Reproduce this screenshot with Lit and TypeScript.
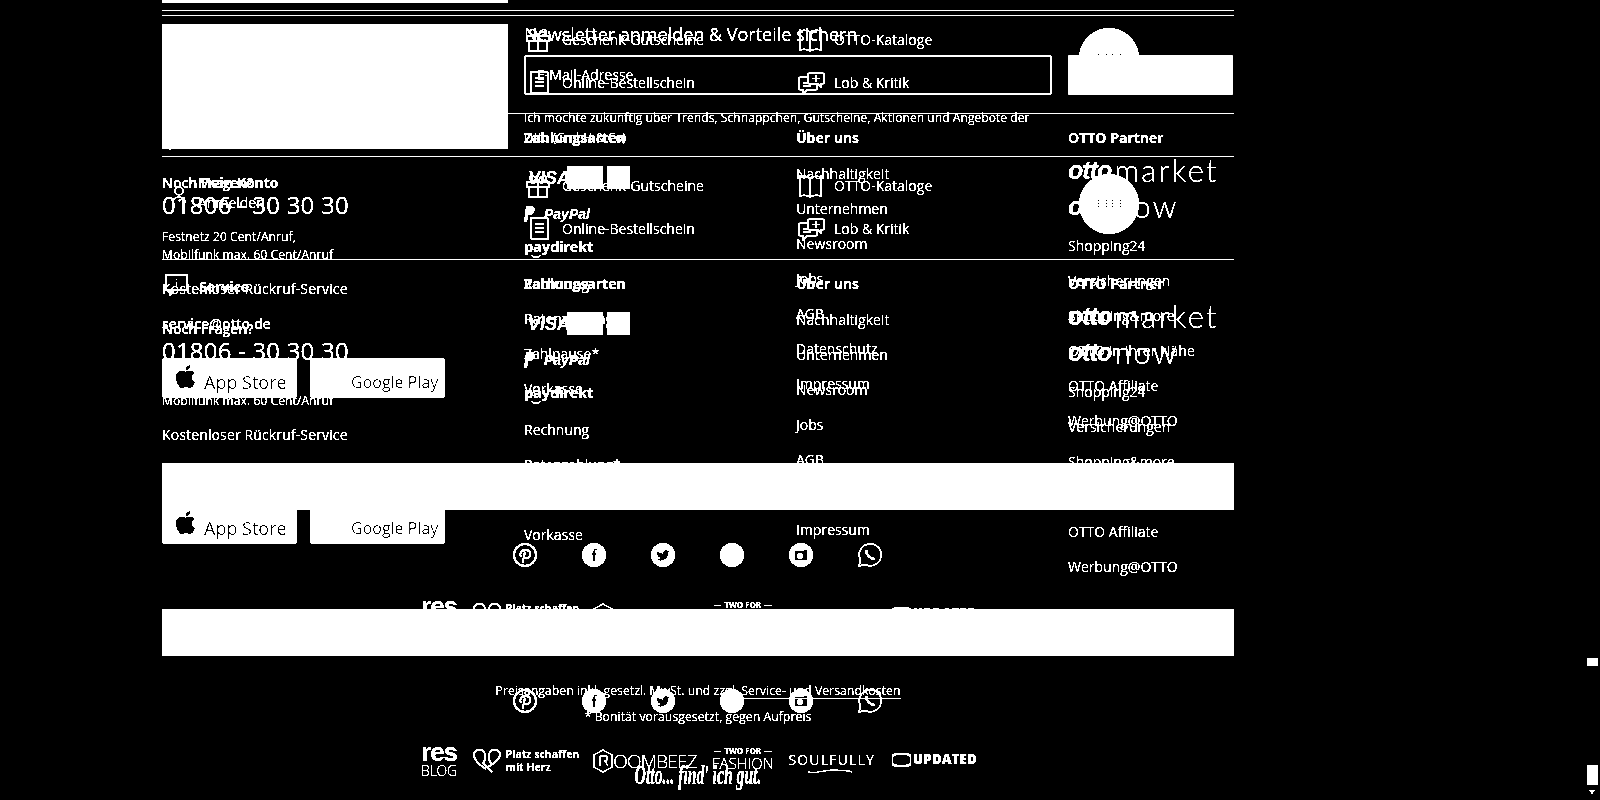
import { LitElement, html, css, svg } from "lit";
import { customElement } from "lit/decorators.js";

const apple = svg`<path fill="#000" d="M17.05 20.28c-.98.95-2.05.8-3.08.35-1.09-.46-2.09-.48-3.24 0-1.44.62-2.2.44-3.06-.35C2.79 15.25 3.51 7.59 9.05 7.31c1.35.07 2.29.74 3.08.8 1.18-.24 2.31-.93 3.57-.84 1.51.12 2.65.72 3.4 1.8-3.12 1.87-2.38 5.98.48 7.13-.57 1.5-1.31 2.99-2.54 4.09zM12.03 7.25c-.15-2.23 1.66-4.07 3.74-4.25.29 2.58-2.34 4.5-3.74 4.25z"/>`;

@customElement("otto-footer")
export class OttoFooter extends LitElement {
  static styles = css`
    :host {
      display: block;
      width: 1072px;
      margin-left: 162px;
      color: #fff;
      font: 14px/20px "Open Sans", sans-serif;
    }
    hr {
      margin: 0;
      border: 0;
      height: 1px;
      background: #fff;
    }
    .grid {
      display: grid;
      grid-template-columns: 346px 256px 256px 166px;
      column-gap: 16px;
    }
    .news {
      height: 140px;
    }
    .promo {
      margin-top: 8px;
      height: 125px;
      background: #fff;
    }
    .news-main {
      grid-column: span 2;
      padding-top: 7px;
    }
    .news-title {
      font-size: 18px;
      line-height: 22px;
    }
    .input {
      box-sizing: border-box;
      margin-top: 10px;
      height: 40px;
      border: 2px solid #fff;
      border-radius: 3px;
      padding-left: 11px;
      line-height: 36px;
    }
    .consent {
      margin-top: 13px;
      font-size: 12px;
      line-height: 20px;
      letter-spacing: 0.07px;
      white-space: nowrap;
    }
    .btn {
      margin: 39px 1px 0 0;
      height: 40px;
      background: #fff;
      border-radius: 2px;
    }
    .account {
      height: 102px;
    }
    .konto {
      display: flex;
      padding-top: 16px;
    }
    .konto-icon {
      flex: none;
      width: 36px;
      padding: 13px 0 0 10px;
      box-sizing: border-box;
    }
    .links {
      padding-top: 17px;
      display: flex;
      flex-direction: column;
      gap: 19px;
    }
    .link {
      display: flex;
      align-items: center;
      height: 24px;
      font-weight: 500;
    }
    .link svg {
      flex: none;
      width: 38px;
      height: 24px;
    }
    .help {
      margin: 17px 0 0 11px;
      width: 60px;
      height: 60px;
    }
    .help path {
      shape-rendering: crispEdges;
    }
    b,
    h3 {
      margin: 0;
      font-size: 14px;
      font-weight: 700;
    }
    .columns {
      height: 335px;
      padding-top: 14px;
    }
    .service-head {
      display: flex;
      gap: 11px;
      height: 20px;
      padding-left: 3px;
    }
    .service-head b {
      padding-top: 3px;
    }
    .noch {
      margin-top: 26px;
      line-height: 18px;
      font-weight: 600;
    }
    .phone {
      font-size: 24px;
      line-height: 26px;
      letter-spacing: 0.2px;
    }
    .tariff {
      margin-top: 10px;
      font-size: 12px;
      line-height: 18px;
      letter-spacing: 0.1px;
    }
    .callback {
      margin-top: 15px;
      font-weight: 500;
      letter-spacing: 0.13px;
    }
    .mail {
      margin-top: 15px;
      font-weight: 600;
    }
    .stores {
      margin-top: 24px;
      display: flex;
      gap: 13px;
    }
    .store {
      display: flex;
      align-items: center;
      box-sizing: border-box;
      width: 135px;
      height: 40px;
      background: #fff;
      color: #000;
      border-radius: 3px;
      white-space: nowrap;
      padding-top: 8px;
    }
    .store.as {
      font-size: 18px;
      padding-left: 42px;
      position: relative;
    }
    .store.as svg {
      position: absolute;
      left: 8px;
      top: 3px;
      width: 31px;
      height: 31px;
    }
    .store.gp {
      font-size: 16px;
      padding-left: 41px;
    }
    ul {
      list-style: none;
      margin: 8px 0 0;
      padding: 0;
    }
    li {
      box-sizing: border-box;
      height: 35px;
      display: flex;
      align-items: center;
      font-weight: 500;
    }
    li.first {
      height: 28px;
    }
    li.second {
      height: 44px;
    }
    li.cards {
      height: 37px;
      padding-top: 6px;
    }
    li.pp {
      height: 38px;
      padding-top: 4px;
    }
    .visa {
      font: italic 700 18px/1 "Liberation Sans", sans-serif;
      width: 39px;
      margin-left: 4px;
    }
    .card {
      width: 36px;
      height: 23px;
      background: #fff;
      margin-right: 4px;
    }
    .card.small {
      width: 23px;
    }
    .paypal {
      font: italic 700 14px/1 "Liberation Sans", sans-serif;
      display: flex;
      align-items: center;
      gap: 9px;
    }
    .paydirekt {
      display: flex;
      flex-direction: column;
      font: 700 15px/15px "Open Sans", sans-serif;
      letter-spacing: -0.4px;
    }
    .paydirekt svg {
      margin-left: 6px;
    }
    .otto {
      font: italic 900 25px/1 "Liberation Sans", sans-serif;
      letter-spacing: -1px;
      margin-right: 3px;
    }
    .brand {
      font: 300 31px/1 "Lato", sans-serif;
      letter-spacing: 2.2px;
    }
    .strip {
      position: relative;
      z-index: 2;
      height: 47px;
      background: #fff;
    }
    .social {
      margin-top: 33px;
      padding-right: 2px;
      display: flex;
      justify-content: center;
      gap: 45px;
    }
    .social svg {
      width: 24px;
      height: 24px;
      display: block;
    }
    .logos {
      margin-top: 33px;
      height: 29px;
      display: flex;
      justify-content: center;
      gap: 16.6px;
      white-space: nowrap;
    }
    .logo {
      display: flex;
      flex: none;
    }
    .logo svg {
      flex: none;
    }
    .res {
      width: 35px;
      flex-direction: column;
      margin-top: -3px;
      font: 900 26px/19px "Liberation Sans", sans-serif;
      letter-spacing: -1px;
    }
    .res small {
      margin-top: 3px;
      font: 300 14px/11px "Open Sans", sans-serif;
      letter-spacing: -0.2px;
    }
    .platz {
      width: 104px;
      gap: 5px;
      font: 700 10.5px/13px "Open Sans", sans-serif;
      padding-top: 2px;
    }
    .roombeez {
      width: 104px;
      align-items: center;
      font: 300 19px/1 "Open Sans", sans-serif;
      letter-spacing: -0.8px;
      height: 30px;
    }
    .twofor {
      width: 58px;
      flex-direction: column;
      align-items: center;
      font: 300 15px/15px "Open Sans", sans-serif;
    }
    .twofor small {
      font: 700 8px/10px "Open Sans", sans-serif;
      width: 100%;
      display: flex;
      align-items: center;
      gap: 3px;
      justify-content: center;
    }
    .twofor i {
      flex: 1;
      height: 1px;
      background: #fff;
    }
    .soul {
      width: 87px;
      flex-direction: column;
      font: 400 14px/18px "Open Sans", sans-serif;
      letter-spacing: 1.2px;
      padding-top: 5px;
    }
    .soul svg {
      margin-left: 20px;
    }
    .updated {
      width: 83px;
      align-items: center;
      gap: 2px;
      font: 800 13.5px/1 "Open Sans", sans-serif;
      height: 28px;
    }
  `;

  render() {
    return html`
      <hr />
      <section class="grid news">
        <div class="promo"></div>
        <div class="news-main">
          <div class="news-title">Newsletter anmelden &amp; Vorteile sichern</div>
          <div class="input">E-Mail-Adresse</div>
          <div class="consent">
            Ich möchte zukünftig über Trends, Schnäppchen, Gutscheine, Aktionen und Angebote der<br />
            Otto (GmbH &amp; Co)
          </div>
        </div>
        <div class="btn"></div>
      </section>
      <hr />
      <section class="grid account">
        <div class="konto">
          <div class="konto-icon">
            <svg width="14" height="17" viewBox="0 0 14 17" fill="none" stroke="#fff" stroke-width="1.5">
              <circle cx="7" cy="5" r="4" />
              <path d="M1 17c0-4 2-6 6-6s6 2 6 6" />
            </svg>
          </div>
          <div>
            <b>Mein Konto</b><br />
            <span>Anmelden</span>
          </div>
        </div>
        <div class="links">
          <div class="link">
            <svg viewBox="0 0 38 24" fill="none" stroke="#fff" stroke-width="1.5">
              <path d="M3 8h22v5H3zM5 13v10h18V13M14 8v15M14 8c-3-8-9-8-8-3 1 3 6 3 8 3zM14 8c3-8 9-8 8-3-1 3-6 3-8 3z" />
            </svg>
            Geschenk-Gutscheine
          </div>
          <div class="link">
            <svg viewBox="0 0 38 24" fill="none" stroke="#fff" stroke-width="1.8">
              <path d="M7 1h15a2 2 0 0 1 2 2v19H9a2 2 0 0 1-2-2zM11 7h9M11 11h9M11 15h9" />
            </svg>
            Online-Bestellschein
          </div>
        </div>
        <div class="links">
          <div class="link">
            <svg viewBox="0 0 38 24" fill="none" stroke="#fff" stroke-width="1.5">
              <path d="M14 4c-3-2-7-2-10-1v19c3-1 7-1 10 1 3-2 7-2 11-1V3c-4-1-8-1-11 1zM14 4v19M4 3V1M25 3V1" />
            </svg>
            OTTO-Kataloge
          </div>
          <div class="link">
            <svg viewBox="0 0 38 24" fill="none" stroke="#fff" stroke-width="1.5">
              <path d="M12 6H5a2 2 0 0 0-2 2v9a2 2 0 0 0 2 2h2v4l4-4h8a2 2 0 0 0 2-2v-3M7 12h6M7 15h8" />
              <path d="M14 2h12a2 2 0 0 1 2 2v7a2 2 0 0 1-2 2h-1v3l-3-3h-8a2 2 0 0 1-2-2V4a2 2 0 0 1 2-2zM20 4v7M16.5 7.5h7" />
            </svg>
            Lob &amp; Kritik
          </div>
        </div>
        <div class="help">
          <svg width="60" height="60" viewBox="0 0 60 60">
            <circle cx="30" cy="30" r="30" fill="#fff" />
            <path d="M19 26v1M19 29v1M19 32v1M27 26v1M27 29v1M27 32v1M33 26v1M33 29v1M33 32v1M41 26v1M41 29v1M41 32v1" stroke="#000" />
          </svg>
        </div>
      </section>
      <hr />
      <section class="grid columns">
        <div>
          <div class="service-head">
            <svg width="23" height="22" viewBox="0 0 23 22" fill="none" stroke="#fff" stroke-width="1.5">
              <path d="M1 1h21v15H9l-4 5v-5H1zM11.5 5v1M11.5 8v5" />
            </svg>
            <b>Service</b>
          </div>
          <div class="noch">Noch Fragen?</div>
          <div class="phone">01806 - 30 30 30</div>
          <div class="tariff">Festnetz 20 Cent/Anruf,<br />Mobilfunk max. 60 Cent/Anruf</div>
          <div class="callback">Kostenloser Rückruf-Service</div>
          <div class="mail">service@otto.de</div>
          <div class="stores">
            <div class="store as">
              <svg viewBox="0 0 24 24">${apple}</svg>
              App Store
            </div>
            <div class="store gp">Google Play</div>
          </div>
        </div>
        <div>
          <h3>Zahlungsarten</h3>
          <ul>
            <li class="cards"><span class="visa">VISA</span><span class="card"></span><span class="card small"></span></li>
            <li class="pp">
              <span class="paypal">
                <svg width="11" height="16" viewBox="0 0 11 16"><path fill="#fff" d="M2 0h5c3 0 4 2 3.500 4.500C10 8 8 9 5 9H4l-1 7H0z" /></svg>
                PayPal
              </span>
            </li>
            <li>
              <span class="paydirekt">
                paydirekt
                <svg width="12" height="5" viewBox="0 0 12 5" fill="none" stroke="#fff" stroke-width="1.500"><path d="M1 1c3 3 7 3 10 0" /></svg>
              </span>
            </li>
            <li>Rechnung</li>
            <li>Ratenzahlung*</li>
            <li>Zahlpause*</li>
            <li>Vorkasse</li>
          </ul>
        </div>
        <div>
          <h3>Über uns</h3>
          <ul>
            <li>Nachhaltigkeit</li>
            <li>Unternehmen</li>
            <li>Newsroom</li>
            <li>Jobs</li>
            <li>AGB</li>
            <li>Datenschutz</li>
            <li>Impressum</li>
          </ul>
        </div>
        <div>
          <h3>OTTO Partner</h3>
          <ul>
            <li class="first"><span class="otto">otto</span><span class="brand">market</span></li>
            <li class="second"><span class="otto">otto</span><span class="brand">now</span></li>
            <li>Shopping24</li>
            <li>Versicherungen</li>
            <li>Shopping&amp;more</li>
            <li>OTTO in Ihrer Nähe</li>
            <li>OTTO Affiliate</li>
            <li>Werbung@OTTO</li>
          </ul>
        </div>
      </section>
      <div class="strip"></div>
      <div class="social">
        <svg viewBox="0 0 24 24" fill="none" stroke="#fff" stroke-width="2">
          <circle cx="12" cy="12" r="11" />
          <path d="M8 14c-2-3 0-7 4.500-7 4 0 5.500 3 4.500 6-1 3-4 3-5 1M12 9l-2.500 11" />
        </svg>
        <svg viewBox="0 0 24 24">
          <circle cx="12" cy="12" r="12" fill="#fff" />
          <path d="M15 6.500h-1.500c-1 0-1.500.5-1.500 1.500v10M10 11h4.500" fill="none" stroke="#000" stroke-width="1.500" />
        </svg>
        <svg viewBox="0 0 24 24">
          <circle cx="12" cy="12" r="12" fill="#fff" />
          <path transform="translate(5 5.500) scale(.58)" d="M23 3a10.900 10.900 0 0 1-3 1.400 4.500 4.500 0 0 0-7.900 3v1A10.700 10.700 0 0 1 3 4s-4 9 5 13a11.600 11.600 0 0 1-7 2c9 5 20 0 20-11.500 0-.3 0-.6-.1-.8A7.700 7.700 0 0 0 23 3z" />
        </svg>
        <svg viewBox="0 0 24 24"><circle cx="12" cy="12" r="12" fill="#fff" /></svg>
        <svg viewBox="0 0 24 24">
          <circle cx="12" cy="12" r="12" fill="#fff" />
          <path d="M6 8h9v-1h3v10H6zM8 13a3 3 0 1 0 6 0 3 3 0 0 0-6 0" fill="#000" fill-rule="evenodd" />
        </svg>
        <svg viewBox="0 0 24 24" fill="none" stroke="#fff">
          <path stroke-width="1.500" d="M1 23l1.500-6A11 11 0 1 1 7 21.500z" />
          <path stroke-width="2.500" d="M8 7c0 4 4 9 9 9" />
        </svg>
      </div>
      <div class="logos">
        <div class="logo res">res<small>BLOG</small></div>
        <div class="logo platz">
          <svg width="28" height="26" viewBox="0 0 28 26" fill="none" stroke="#fff" stroke-width="1.800">
            <path d="M13 21C5 16 1 12 1 7a5.500 5.500 0 0 1 10-3c2 3 2 8-1 11M15 19c8-5 12-8 12-12a5.500 5.500 0 0 0-10-3c-2 3-2 8 1 11M10 15l9 9" />
          </svg>
          <span>Platz schaffen<br />mit Herz</span>
        </div>
        <div class="logo roombeez">
          <svg width="20" height="24" viewBox="0 0 20 24" fill="none" stroke="#fff" stroke-width="1.300">
            <path d="M10 1l9 5v12l-9 5-9-5V6zM7 7h5c3 0 3 5 0 5l3 5M7 7v10" />
          </svg>
          OOMBEEZ
        </div>
        <div class="logo twofor"><small><i></i>TWO FOR<i></i></small>FASHION</div>
        <div class="logo soul">
          SOULFULLY
          <svg width="46" height="5" viewBox="0 0 50 5" fill="none" stroke="#fff" stroke-width="1.200">
            <path d="M0 3c10 2 15-2 28-2 8 0 15 0 20 2" />
          </svg>
        </div>
        <div class="logo updated">
          <svg width="19" height="14" viewBox="0 0 19 14" fill="none" stroke="#fff" stroke-width="2.500">
            <path d="M5 13A6 6 0 0 1 5 1h9a6 6 0 0 1 0 12z" />
          </svg>
          UPDATED
        </div>
      </div>
    `;
  }
}

@customElement("app-root")
export class AppRoot extends LitElement {
  static styles = css`
    :host {
      display: block;
      position: relative;
      height: 800px;
      overflow: hidden;
      background: #000;
      filter: grayscale(1) brightness(1.5) contrast(60);
    }
    .stack {
      display: grid;
    }
    .stack > * {
      grid-area: 1 / 1;
    }
    .back {
      margin-top: -131px;
    }
    .front {
      margin-top: 15px;
    }
    .legal {
      width: 1072px;
      margin-left: 162px;
      padding-top: 681px;
      text-align: center;
      color: #fff;
      font: 12.3px/20px "Open Sans", sans-serif;
    }
    .legal p {
      margin: 0 0 6px;
    }
    .legal u {
      text-underline-offset: 3px;
    }
    .claim {
      margin-top: 34px;
      font: italic 700 28px/28px "Liberation Serif", serif;
      transform: scaleX(0.56);
    }
    .scrollbar i {
      position: absolute;
      right: 2px;
      width: 11px;
      background: #fff;
    }
    .thumb-a {
      top: 658px;
      height: 8px;
    }
    .thumb-b {
      top: 765px;
      height: 20px;
    }
    .arrow {
      position: absolute;
      left: 1589px;
      top: 790px;
      width: 0;
      height: 0;
      border: 3.500px solid transparent;
      border-top: 4px solid #fff;
      border-bottom: 0;
    }
  `;

  render() {
    return html`
      <div class="stack">
        <otto-footer class="back"></otto-footer>
        <otto-footer class="front"></otto-footer>
        <div class="legal">
          <p>Preisangaben inkl. gesetzl. MwSt. und zzgl. <u>Service- und Versandkosten</u></p>
          <p>* Bonität vorausgesetzt, gegen Aufpreis</p>
          <div class="claim">Otto... find' ich gut.</div>
        </div>
      </div>
      <div class="scrollbar">
        <i class="thumb-a"></i>
        <i class="thumb-b"></i>
        <span class="arrow"></span>
      </div>
    `;
  }
}
